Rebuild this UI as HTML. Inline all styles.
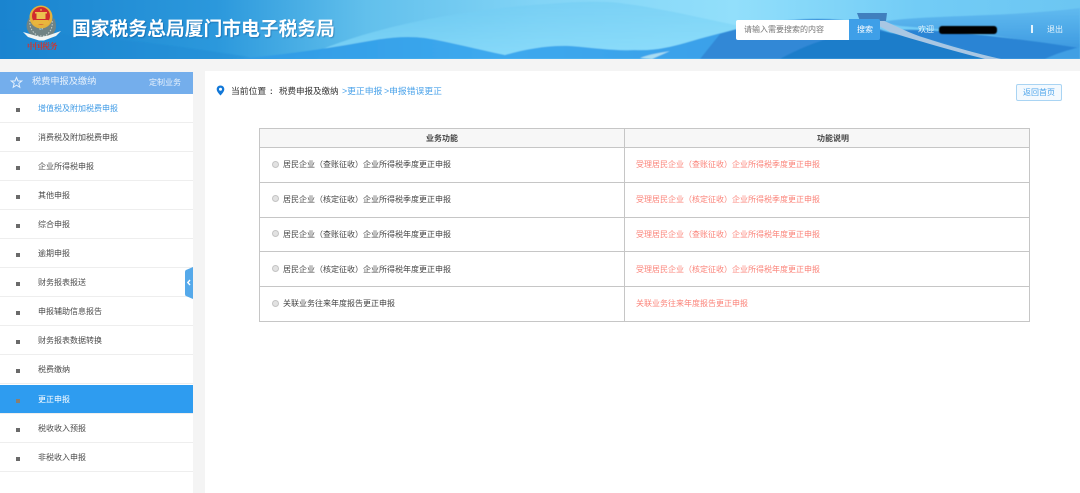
<!DOCTYPE html>
<html lang="zh"><head><meta charset="utf-8"><title>国家税务总局厦门市电子税务局</title>
<style>
*{box-sizing:border-box}
html,body{margin:0;padding:0;width:1080px;height:493px;overflow:hidden;background:#f4f4f4;font-family:"Liberation Sans","Noto Sans CJK SC",sans-serif;}
.a{position:absolute;white-space:nowrap}
.t{font-size:8px;line-height:10px;filter:blur(.3px)}
#side{position:absolute;left:0;top:72px;width:193px;height:421px;background:#fff}
#sh{position:absolute;left:0;top:0;width:193px;height:22px;background:#74aeec}
.it{position:absolute;left:0;width:193px;height:29px;border-bottom:1px solid #eeeeee;color:#4a4a4a}
.it i{position:absolute;left:16px;top:14px;width:4px;height:4px;background:#6a6a6a;filter:blur(.3px)}
.it span{position:absolute;left:38px;top:10px;font-size:8px;line-height:10px;white-space:nowrap;filter:blur(.3px)}
.it.on{background:#2e9cf0;color:#fff}
#main{position:absolute;left:205px;top:71px;width:875px;height:422px;background:#fff}
.h{position:absolute;background:#c6c6c6}
.r{position:absolute;width:7px;height:7px;border-radius:50%;background:#e2e2e2;border:1px solid #c4c4c4;left:272px}
</style></head><body>
<svg class="a" style="left:0;top:0" width="1080" height="59" viewBox="0 0 1080 59">
<defs>
<linearGradient id="g" x1="0" x2="1" y1="0" y2="0"><stop offset="0" stop-color="#1a84cf"/><stop offset=".2" stop-color="#2b98dc"/><stop offset=".34" stop-color="#62c0ec"/><stop offset=".5" stop-color="#82d4f6"/><stop offset=".68" stop-color="#92dffb"/><stop offset=".85" stop-color="#72ccf6"/><stop offset="1" stop-color="#6cc6f2"/></linearGradient>
<linearGradient id="g2" x1="0" x2="0" y1="0" y2="1"><stop offset="0" stop-color="#6fcbf2" stop-opacity=".7"/><stop offset="1" stop-color="#8fe0fd" stop-opacity="1"/></linearGradient>
<linearGradient id="g3" x1="0" x2="1" y1="0" y2="0"><stop offset="0" stop-color="#2f9ae4"/><stop offset=".5" stop-color="#3da9ee"/><stop offset="1" stop-color="#3a9fe8"/></linearGradient>
<linearGradient id="g4" x1="0" x2="0" y1="0" y2="1"><stop offset="0" stop-color="#5db6ee"/><stop offset="1" stop-color="#2c8ada"/></linearGradient>
<filter id="b"><feGaussianBlur stdDeviation=".6"/></filter>
<filter id="b2"><feGaussianBlur stdDeviation=".35"/></filter>
</defs>
<rect width="1080" height="59" fill="url(#g)"/>
<g filter="url(#b)">
<path d="M0 30C80 34 180 45 260 59H0Z" fill="#1c86d2" opacity=".35"/>
<path d="M300 59C360 30 440 14 520 6C560 3 590 0 620 3C660 8 700 18 740 26L780 59Z" fill="url(#g2)" opacity=".7"/>
<path d="M230 59C280 56 330 48 375 40C392 37 410 36 425 38C450 42 480 50 505 55C525 49 550 45 570 46C595 48 615 51 635 50C655 51 670 47 685 43C705 37 725 32 745 27L760 59Z" fill="url(#g3)"/>
<path d="M640 58C650 54 660 53 670 51L652 59Z" fill="#a9dcf2"/>
<path d="M720 34C750 24 800 16 840 20C870 24 880 30 900 36L1000 59H700Z" fill="#3188d6"/>
<path d="M880 22C930 14 1000 18 1080 8V50C1030 40 960 30 900 26Z" fill="url(#g4)" opacity=".75"/>
<path d="M892 30C930 28 1000 36 1080 48V59H1000Z" fill="#2c84d4"/>
<path d="M1045 59C1055 54 1068 50 1080 47V59Z" fill="#3f9fe4"/>
<path d="M780 59C815 40 850 30 880 31C915 36 960 48 1000 59Z" fill="#1e7dca"/>
</g>
<g filter="url(#b2)">
<path d="M878 19C890 22 905 32 925 38C950 46 975 53 1001 59H985C950 50 915 40 890 32C885 29 880 27 876 24Z" fill="#a9c7e3"/>
<path d="M857 13H887L886 21H860Z" fill="#3f7fbe"/>
</g>
<!-- emblem -->
<g filter="url(#b2)">
<path d="M29 18C24 26 27 34 36 38H48C56 34 58 26 54 18L41 30Z" fill="#6f8384"/>
<path d="M30 20C29 27 32 32 38 36H45C51 32 53 27 52 20L41 30Z" fill="none" stroke="#c9d2d0" stroke-width="1" stroke-dasharray="1.500 1.500"/>
<path d="M23 32L35 35.500L41 37L48 35.500L61 31L56 36L44 40.500H39L28 37Z" fill="#f1f4f2"/>
<circle cx="41" cy="17" r="11.500" fill="#e4b13a"/>
<circle cx="41" cy="16" r="9" fill="#d02a2e"/>
<path d="M41 8.500l1 2h-2z" fill="#f4cf55"/>
<rect x="36.500" y="13" width="9" height="6" fill="#ecc04f"/>
<rect x="35" y="12" width="12" height="1.500" fill="#ecc04f"/>
<rect x="33" y="20" width="16" height="4.500" rx="1" fill="#e9b63e"/>
</g>
</svg>
<div class="a" style="left:27px;top:41px;font-size:8px;line-height:11px;color:#d0352f;font-weight:700;letter-spacing:-.5px;font-family:'Liberation Serif','Noto Serif CJK SC',serif;filter:blur(.35px)">中国税务</div>

<div class="a" style="left:72px;top:18px;font-size:18.8px;line-height:22px;color:#fff;font-weight:700;text-shadow:1px 1px 1px rgba(0,60,120,.35);filter:blur(.3px)">国家税务总局厦门市电子税务局</div>

<div class="a" style="left:736px;top:20px;width:113px;height:20px;background:#fff;border-radius:2px 0 0 2px"></div>
<div class="a t" style="left:744px;top:25px;color:#777">请输入需要搜索的内容</div>
<div class="a" style="left:849px;top:19px;width:31px;height:21px;background:#3e9fe8;border-radius:0 2px 2px 0"></div>
<div class="a t" style="left:857px;top:25px;color:#fff">搜索</div>
<div class="a t" style="left:918px;top:25px;color:#e6f4fc">欢迎</div>
<div class="a" style="left:939px;top:26px;width:58px;height:8px;background:#000;border-radius:3px;filter:blur(.4px)"></div>
<div class="a" style="left:1031px;top:25px;width:1.500px;height:8px;background:#e6f4fc"></div>
<div class="a t" style="left:1047px;top:25px;color:#e6f4fc">退出</div>

<div id="side">
<div id="sh">
<svg class="a" style="left:10px;top:4px" width="13" height="13" viewBox="0 0 13 13"><path d="M6.500 1.500L8 5H11.700L8.800 7.400L9.800 11.300L6.500 9.200L3.200 11.300L4.200 7.400L1.300 5H5Z" fill="none" stroke="#e4f0fc" stroke-width="1"/></svg>
<div class="a" style="left:32px;top:3px;font-size:9.200px;line-height:12px;color:#e8f2fc;filter:blur(.3px)">税费申报及缴纳</div>
<div class="a t" style="left:149px;top:6px;color:#e8f2fc">定制业务</div>
</div>
<div class="it" style="top:22px;color:#3f9be6"><i></i><span>增值税及附加税费申报</span></div>
<div class="it" style="top:51px"><i></i><span>消费税及附加税费申报</span></div>
<div class="it" style="top:80px"><i></i><span>企业所得税申报</span></div>
<div class="it" style="top:109px"><i></i><span>其他申报</span></div>
<div class="it" style="top:138px"><i></i><span>综合申报</span></div>
<div class="it" style="top:167px"><i></i><span>逾期申报</span></div>
<div class="it" style="top:196px"><i></i><span>财务报表报送</span></div>
<div class="it" style="top:225px"><i></i><span>申报辅助信息报告</span></div>
<div class="it" style="top:254px"><i></i><span>财务报表数据转换</span></div>
<div class="it" style="top:283px"><i></i><span>税费缴纳</span></div>
<div class="it on" style="top:313px"><i style="background:#8a7f70"></i><span>更正申报</span></div>
<div class="it" style="top:342px"><i></i><span>税收收入预报</span></div>
<div class="it" style="top:371px"><i></i><span>非税收入申报</span></div>
</div>
<svg class="a" style="left:185px;top:267px" width="8" height="32" viewBox="0 0 8 32"><path d="M8 0L1 3Q0 3.500 0 5V27Q0 28.500 1 29L8 32Z" fill="#55a9ea"/><path d="M5 13L2.800 15.500L5 18" fill="none" stroke="#fff" stroke-width="1.400"/></svg>

<div id="main"></div>
<svg class="a" style="left:216px;top:85px" width="9" height="11" viewBox="0 0 9 11"><path d="M4.500 .5C2.300 .5.700 2.100.700 4.200C.700 6.500 3 8.800 4.500 10.500C6 8.800 8.300 6.500 8.300 4.200C8.300 2.100 6.700 .5 4.500 .5Z" fill="#1278d8"/><circle cx="4.500" cy="4.200" r="1.500" fill="#fff"/></svg>
<div class="a" style="left:231px;top:86px;font-size:8.800px;line-height:11px;color:#333;filter:blur(.3px)">当前位置</div>
<div class="a t" style="left:270px;top:87px;color:#333;font-weight:700">:</div>
<div class="a" style="left:279px;top:86px;font-size:8.500px;line-height:11px;color:#333;filter:blur(.3px)">税费申报及缴纳</div>
<div class="a" style="left:342px;top:86px;font-size:8.800px;line-height:11px;color:#4ba3ea;filter:blur(.3px)">&gt;更正申报</div>
<div class="a" style="left:384px;top:86px;font-size:8.800px;line-height:11px;color:#4ba3ea;filter:blur(.3px)">&gt;申报错误更正</div>
<div class="a" style="left:1016px;top:84px;width:46px;height:17px;background:#f3f9fe;border:1px solid #a9d4f3;border-radius:2px"></div>
<div class="a t" style="left:1023px;top:88px;color:#4ba3ea">返回首页</div>

<!-- table -->
<div class="h" style="left:259px;top:128px;width:771px;height:194px;background:#fff;border:1px solid #c6c6c6"></div>
<div class="a" style="left:260px;top:129px;width:769px;height:19px;background:#f7f7f7"></div>
<div class="h" style="left:259px;top:147px;width:771px;height:1px"></div>
<div class="h" style="left:259px;top:182px;width:771px;height:1px"></div>
<div class="h" style="left:259px;top:217px;width:771px;height:1px"></div>
<div class="h" style="left:259px;top:251px;width:771px;height:1px"></div>
<div class="h" style="left:259px;top:286px;width:771px;height:1px"></div>
<div class="h" style="left:624px;top:128px;width:1px;height:194px"></div>

<div class="a t" style="left:426px;top:134px;color:#444;font-weight:700">业务功能</div>
<div class="a t" style="left:817px;top:134px;color:#444;font-weight:700">功能说明</div>

<div class="r" style="top:161px"></div>
<div class="a t" style="left:283px;top:160px;color:#444">居民企业（查账征收）企业所得税季度更正申报</div>
<div class="a t" style="left:636px;top:160px;color:#fb8379">受理居民企业（查账征收）企业所得税季度更正申报</div>
<div class="r" style="top:195px"></div>
<div class="a t" style="left:283px;top:195px;color:#444">居民企业（核定征收）企业所得税季度更正申报</div>
<div class="a t" style="left:636px;top:195px;color:#fb8379">受理居民企业（核定征收）企业所得税季度更正申报</div>
<div class="r" style="top:230px"></div>
<div class="a t" style="left:283px;top:230px;color:#444">居民企业（查账征收）企业所得税年度更正申报</div>
<div class="a t" style="left:636px;top:230px;color:#fb8379">受理居民企业（查账征收）企业所得税年度更正申报</div>
<div class="r" style="top:265px"></div>
<div class="a t" style="left:283px;top:265px;color:#444">居民企业（核定征收）企业所得税年度更正申报</div>
<div class="a t" style="left:636px;top:265px;color:#fb8379">受理居民企业（核定征收）企业所得税年度更正申报</div>
<div class="r" style="top:300px"></div>
<div class="a t" style="left:283px;top:299px;color:#444">关联业务往来年度报告更正申报</div>
<div class="a t" style="left:636px;top:299px;color:#fb8379">关联业务往来年度报告更正申报</div>
</body></html>
